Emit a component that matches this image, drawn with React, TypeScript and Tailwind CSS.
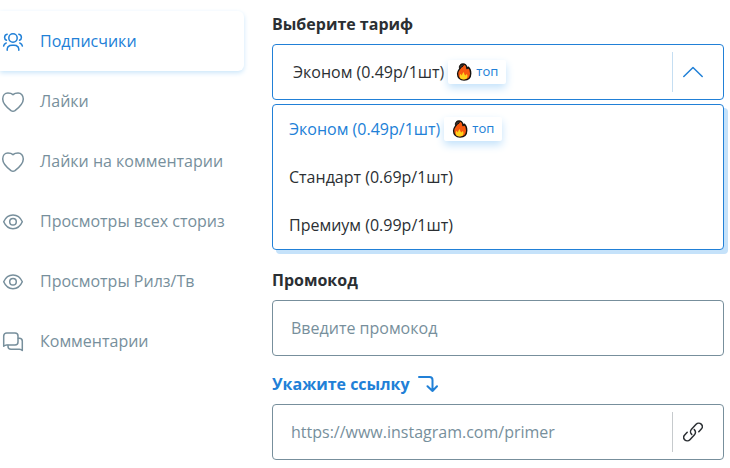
import React, { useState } from "react";
import clsx from "clsx";

type IconProps = { className?: string };

const strokeProps = {
  fill: "none",
  stroke: "currentColor",
  strokeWidth: 1.5,
  strokeLinecap: "round" as const,
  strokeLinejoin: "round" as const,
  "aria-hidden": true,
};

function UsersIcon({ className }: IconProps) {
  return (
    <svg viewBox="0 0 26 26" className={className} {...strokeProps}>
      <circle cx="13" cy="10" r="4.2" />
      <path d="M7.2 22.300v-1.200c0-1.600 1-2.800 2.600-3.600.8-.4 1.800-.3 3.200-.3s2.400-.1 3.200.3c1.600.8 2.600 2 2.600 3.600v1.200" />
      <path d="M7.200 6.200c-1.600.3-2.600 1.600-2.600 3.200 0 1.400.7 2.400 1.900 2.900M6.200 15c-1.500.5-2.400 1.500-2.600 3.100" />
      <path d="M18.800 6.200c1.600.3 2.600 1.600 2.600 3.200 0 1.400-.7 2.400-1.900 2.900M19.800 15c1.500.5 2.400 1.500 2.600 3.100" />
    </svg>
  );
}

function HeartIcon({ className }: IconProps) {
  return (
    <svg viewBox="0 0 26 26" className={className} {...strokeProps}>
      <path d="M13 6.600C11.500 5.300 9.800 5 7.900 5 4.800 5 2.700 7.600 2.700 11c0 4.700 4.600 8.800 8.300 11.700q2 1.300 4 0c3.700-2.900 8.300-7 8.300-11.700 0-3.400-2.100-6-5.200-6-1.900 0-3.600.3-5.100 1.600Z" />
    </svg>
  );
}

function EyeIcon({ className }: IconProps) {
  return (
    <svg viewBox="0 0 26 26" className={className} {...strokeProps}>
      <path d="M3.700 13.800C5.500 9.700 9 7 13 7s7.500 2.700 9.300 6.800C20.500 18 17 20.700 13 20.700S5.500 18 3.700 13.800Z" />
      <circle cx="13" cy="13.800" r="3.300" />
    </svg>
  );
}

function ChatIcon({ className }: IconProps) {
  return (
    <svg viewBox="0 0 26 26" className={className} {...strokeProps}>
      <path d="M3.700 18.300V8a3 3 0 0 1 3-3H15a3 3 0 0 1 3 3v6a3 3 0 0 1-3 3H6.500c-1.200 0-1.900.4-2.800 1.300Z" />
      <path d="M18.300 10.300h1a3 3 0 0 1 3 3v9.200c-.8-.9-1.500-1.300-2.800-1.300H11a3 3 0 0 1-3-3v-1" />
    </svg>
  );
}

function ChevronIcon({ className }: IconProps) {
  return (
    <svg viewBox="0 0 20 20" className={className} {...strokeProps}>
      <path d="M.8 14.500 10 5.500l9.200 9" />
    </svg>
  );
}

function LinkIcon({ className }: IconProps) {
  return (
    <svg viewBox="0 0 20 20" className={className} {...strokeProps}>
      <path d="M8.700 12.400C7.200 11 7.100 8.700 8.500 7.200l4.600-4.900c1.400-1.500 3.700-1.500 5.100-.2 1.400 1.400 1.400 3.600.1 5l-2.500 2.600" />
      <path d="M11.300 7.600c1.500 1.400 1.600 3.700.2 5.200l-4.600 4.900c-1.400 1.500-3.700 1.500-5.100.2-1.400-1.400-1.400-3.600-.1-5l2.500-2.600" />
    </svg>
  );
}

function ArrowDownIcon({ className }: IconProps) {
  return (
    <svg viewBox="0 0 20 16" className={className} {...strokeProps} strokeWidth={2}>
      <path d="M1 1h10.500a3 3 0 0 1 3 3v11M9.500 10.300l5 4.700 4.500-4.700" />
    </svg>
  );
}

function FireIcon({ className }: IconProps) {
  return (
    <svg viewBox="0 0 16 18" className={className} aria-hidden>
      <path
        d="M5.200 1.400C8.800.2 11 2.300 10.900 5.600c.8-.3 1.200-.8 1.300-1.500 1.700 1.300 2.600 3.800 2.500 6.700-.1 3.800-2.500 6.300-6.600 6.300-4.200 0-6.500-2.600-6.500-6.300 0-2.700 1.300-3.900 2.300-5.300C4.600 4.500 4.400 2.800 5.200 1.400Z"
        fill="#f75a10"
        stroke="#16120f"
        strokeWidth="1.400"
        strokeLinejoin="round"
      />
      <path
        d="M3.700 5.600C2.900 4 3.500 2 5.200 1.400c2-.7 2.800.9 1.800 1.800C6.300 3.800 5 4.400 3.700 5.600Z"
        fill="#3a302b"
        stroke="#16120f"
        strokeLinejoin="round"
      />
      <path
        d="M4.700 15.700c-1.300-1.500-1.200-3.400-.3-5l1.500 1.700c.2-1.600.9-2.700 2-3.500 0 1.500.6 2.500 1.400 3.500l1.600-1.500c.9 1.800.8 3.500-.5 4.800-1.900.9-4.100.9-5.700 0Z"
        fill="#ffd21c"
      />
    </svg>
  );
}

const navItems = [
  { label: "Подписчики", icon: UsersIcon },
  { label: "Лайки", icon: HeartIcon },
  { label: "Лайки на комментарии", icon: HeartIcon },
  { label: "Просмотры всех сториз", icon: EyeIcon },
  { label: "Просмотры Рилз/Тв", icon: EyeIcon },
  { label: "Комментарии", icon: ChatIcon },
];

const tariffs = [
  { label: "Эконом (0.49р/1шт)", top: true },
  { label: "Стандарт (0.69р/1шт)", top: false },
  { label: "Премиум (0.99р/1шт)", top: false },
];

function TopBadge() {
  return (
    <span className="flex h-6 items-center gap-1 rounded-xs bg-white px-2 text-[13px] text-[#2180d7] shadow-[0_4px_8px_#c3e2fb]">
      <FireIcon className="h-[18px] w-4" />
      топ
    </span>
  );
}

export default function App() {
  const [active, setActive] = useState(0);
  const [open, setOpen] = useState(true);
  const [selected, setSelected] = useState(0);

  return (
    <main className="flex gap-7 bg-white pr-1.5 font-['Open_Sans','Noto_Sans',sans-serif] text-base text-[#2b2f33]">
      <nav className="w-61 shrink-0 pt-[11px]">
        {navItems.map(({ label, icon: Icon }, i) => (
          <a
            key={label}
            href="#"
            onClick={() => setActive(i)}
            className={clsx(
              "flex h-15 items-center gap-3.5 rounded-r-md",
              i === active
                ? "text-[#2180d7] shadow-[0_2px_5px_#cbe6fa]"
                : "text-[#778f9c]"
            )}
          >
            <Icon className="size-[26px] shrink-0" />
            {label}
          </a>
        ))}
      </nav>

      <form className="flex min-w-0 flex-1 flex-col gap-4 pt-3">
        <div className="pb-0.5">
          <label htmlFor="tariff" className="mb-2 block font-bold">
            Выберите тариф
          </label>
          <button
            id="tariff"
            type="button"
            aria-haspopup="listbox"
            aria-expanded={open}
            onClick={() => setOpen(!open)}
            className="flex h-14 w-full items-center gap-1 rounded-sm border border-[#2180d7] px-5"
          >
            {tariffs[selected].label}
            {tariffs[selected].top && <TopBadge />}
            <span className="ml-auto flex h-10 items-center border-l border-[#c5def2] pl-2.5 text-[#2180d7]">
              <ChevronIcon className={clsx("size-5", !open && "rotate-180")} />
            </span>
          </button>
          {open && (
            <ul
              role="listbox"
              aria-label="Выберите тариф"
              className="mt-1 rounded-sm border border-[#2180d7] bg-white shadow-[4px_4px_0_#c5e2fa]"
            >
              {tariffs.map((tariff, i) => (
                <li
                  key={tariff.label}
                  role="option"
                  aria-selected={i === selected}
                  onClick={() => setSelected(i)}
                  className={clsx(
                    "flex h-12 cursor-pointer items-center gap-1 px-4",
                    i === selected && "text-[#2180d7]"
                  )}
                >
                  {tariff.label}
                  {tariff.top && <TopBadge />}
                </li>
              ))}
            </ul>
          )}
        </div>

        <div>
          <label htmlFor="promo" className="mb-2 block font-bold">
            Промокод
          </label>
          <input
            id="promo"
            type="text"
            placeholder="Введите промокод"
            className="block h-14 w-full rounded-sm border border-[#778f9c] px-[18px] outline-none placeholder:text-[#778f9c]"
          />
        </div>

        <div>
          <label
            htmlFor="link"
            className="mb-2 flex items-center gap-2 font-bold text-[#2180d7]"
          >
            Укажите ссылку
            <ArrowDownIcon className="h-4 w-5" />
          </label>
          <div className="flex h-14 items-center rounded-sm border border-[#778f9c] pr-5 pl-[18px]">
            <input
              id="link"
              type="url"
              placeholder="https://www.instagram.com/primer"
              className="min-w-0 flex-1 outline-none placeholder:text-[#778f9c]"
            />
            <span className="flex h-10 items-center border-l border-[#c6cacd] pl-2.5">
              <LinkIcon className="size-5" />
            </span>
          </div>
        </div>
      </form>
    </main>
  );
}
